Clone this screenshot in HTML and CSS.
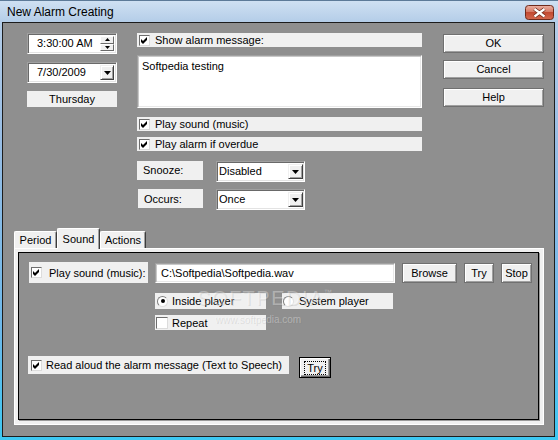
FILE: index.html
```html
<!DOCTYPE html>
<html>
<head>
<meta charset="utf-8">
<title>New Alarm Creating</title>
<link rel="stylesheet" href="styles.css">
</head>
<body>
<div class="window">
  <div class="titlebar">
    <span class="title">New Alarm Creating</span>
    <div class="close">
      <svg width="29" height="15" viewBox="0 0 29 15">
        <defs>
          <linearGradient id="cg" x1="0" y1="0" x2="0" y2="1">
            <stop offset="0" stop-color="#ecb2a4"/>
            <stop offset="0.45" stop-color="#d67a66"/>
            <stop offset="0.5" stop-color="#c24a32"/>
            <stop offset="1" stop-color="#d4694f"/>
          </linearGradient>
        </defs>
        <rect x="0.5" y="0.5" width="28" height="14" rx="3" fill="url(#cg)" stroke="#6e2a1c"/>
        <path d="M9.5 4 L19.5 11.5 M19.5 4 L9.5 11.5" stroke="#6a2618" stroke-width="3.8"/>
        <path d="M9.5 4 L19.5 11.5 M19.5 4 L9.5 11.5" stroke="#ffffff" stroke-width="2.2"/>
      </svg>
    </div>
  </div>

  <div class="client">
    <div class="top">
      <div class="col-time">
        <div class="field time">
          <span class="val">3:30:00 AM</span>
          <div class="spin">
            <div class="spin-btn"><svg width="5" height="3" viewBox="0 0 5 3"><polygon points="0,3 2.5,0 5,3" fill="#000"/></svg></div>
            <div class="spin-btn"><svg width="5" height="3" viewBox="0 0 5 3"><polygon points="0,0 5,0 2.5,3" fill="#000"/></svg></div>
          </div>
        </div>
        <div class="field date">
          <span class="val">7/30/2009</span>
          <div class="drop-btn"><svg width="7" height="4" viewBox="0 0 7 4"><polygon points="0,0 7,0 3.5,4" fill="#000"/></svg></div>
        </div>
        <div class="day">Thursday</div>
      </div>

      <div class="col-main">
        <div class="check-row">
          <span class="cb"><svg width="9" height="9" viewBox="0 0 9 9"><polygon points="1,3 3,5 7,1 7,4 3,8 1,6" fill="#000"/></svg></span>
          <span>Show alarm message:</span>
        </div>
        <div class="memo">Softpedia testing</div>
        <div class="check-row row-sound">
          <span class="cb"><svg width="9" height="9" viewBox="0 0 9 9"><polygon points="1,3 3,5 7,1 7,4 3,8 1,6" fill="#000"/></svg></span>
          <span>Play sound (music)</span>
        </div>
        <div class="check-row row-overdue">
          <span class="cb"><svg width="9" height="9" viewBox="0 0 9 9"><polygon points="1,3 3,5 7,1 7,4 3,8 1,6" fill="#000"/></svg></span>
          <span>Play alarm if overdue</span>
        </div>
        <div class="opt-row row-snooze">
          <div class="opt-label">Snooze:</div>
          <div class="combo">
            <span class="val">Disabled</span>
            <div class="drop-btn"><svg width="7" height="4" viewBox="0 0 7 4"><polygon points="0,0 7,0 3.5,4" fill="#000"/></svg></div>
          </div>
        </div>
        <div class="opt-row row-occurs">
          <div class="opt-label occurs-label">Occurs:</div>
          <div class="combo">
            <span class="val">Once</span>
            <div class="drop-btn"><svg width="7" height="4" viewBox="0 0 7 4"><polygon points="0,0 7,0 3.5,4" fill="#000"/></svg></div>
          </div>
        </div>
      </div>

      <div class="col-buttons">
        <div class="btn dlg">OK</div>
        <div class="btn dlg btn-cancel">Cancel</div>
        <div class="btn dlg btn-help">Help</div>
      </div>
    </div>

    <div class="tabs">
      <div class="tab tab-period">Period</div>
      <div class="tab tab-sound active">Sound</div>
      <div class="tab tab-actions">Actions</div>
    </div>

    <div class="panel">
      <div class="frame">
        <div class="prow prow-1">
          <div class="snd-label">
            <span class="cb"><svg width="9" height="9" viewBox="0 0 9 9"><polygon points="1,3 3,5 7,1 7,4 3,8 1,6" fill="#000"/></svg></span>
            <span>Play sound (music):</span>
          </div>
          <div class="path">C:\Softpedia\Softpedia.wav</div>
          <div class="btn small b-browse">Browse</div>
          <div class="btn small b-try">Try</div>
          <div class="btn small b-stop">Stop</div>
        </div>
        <div class="prow prow-2">
          <div class="radio-item">
            <span class="radio on"></span>
            <span>Inside player</span>
          </div>
          <div class="radio-item sys">
            <span class="radio"></span>
            <span>System player</span>
          </div>
        </div>
        <div class="prow prow-3">
          <div class="repeat-item">
            <span class="cb cb-big"></span>
            <span>Repeat</span>
          </div>
        </div>
        <div class="prow prow-4">
          <div class="tts-label">
            <span class="cb"><svg width="9" height="9" viewBox="0 0 9 9"><polygon points="1,3 3,5 7,1 7,4 3,8 1,6" fill="#000"/></svg></span>
            <span>Read aloud the alarm message (Text to Speech)</span>
          </div>
          <div class="btn default-btn"><span class="focus">Try</span></div>
        </div>
      </div>
    </div>

    <div class="watermark">
      <span class="wm-big">SOFTPEDIA</span><span class="wm-tm">™</span>
      <span class="wm-url">www.softpedia.com</span>
    </div>
  </div>
</div>
</body>
</html>
```

FILE: styles.css
```css
* { box-sizing: border-box; }
html, body { margin: 0; padding: 0; }
body {
  width: 558px;
  height: 440px;
  overflow: hidden;
  font-family: "Liberation Sans", Arial, sans-serif;
  font-size: 11px;
  color: #000;
  background: #8f8f8f;
}

.window {
  width: 558px;
  height: 440px;
  display: flex;
  flex-direction: column;
  padding: 0 3px 3px 2px;
  border-top: 1px solid #5d7a98;
  background: linear-gradient(to bottom, #cfe0f2 0, #b4cde8 21px, #98bde4 140px, #6cb8ea 330px, #3cc8f2 440px);
}

.titlebar {
  height: 21px;
  display: flex;
  align-items: flex-start;
  padding-left: 5px;
  flex: none;
}
.title {
  font-size: 12px;
  line-height: 14px;
  margin-top: 4px;
  color: #000;
}
.close {
  margin-left: auto;
  margin-top: 4px;
  margin-right: 1px;
  width: 29px;
  height: 15px;
}
.close svg { display: block; }

.client {
  position: relative;
  flex: 1;
  border: 1px solid #1c1c1c;
  background: #8f8f8f;
  overflow: hidden;
}

/* ---------- top section ---------- */
.top {
  display: flex;
  align-items: flex-start;
  padding: 10px 0 0 24px;
}
.col-time { width: 90px; display: flex; flex-direction: column; }
.col-main { width: 285px; margin-left: 20px; display: flex; flex-direction: column; }
.col-buttons { width: 101px; margin-left: 21px; margin-top: 1px; display: flex; flex-direction: column; }

.field, .combo {
  display: flex;
  align-items: center;
  background: #fff;
  border: 1px solid;
  border-color: #a0a0a0 #ffffff #ffffff #a0a0a0;
  box-shadow: inset 1px 1px #696969, inset -1px -1px #e3e3e3;
  padding: 2px;
}
.field { height: 21px; }
.field .val { padding-left: 7px; flex: 1; line-height: 13px; }
.date { margin-top: 8px; }

.spin {
  width: 14px;
  height: 15px;
  display: flex;
  flex-direction: column;
}
.spin-btn {
  flex: 1;
  display: flex;
  align-items: center;
  justify-content: center;
  background: #f0f0f0;
  border: 1px solid;
  border-color: #ffffff #6a6a6a #6a6a6a #ffffff;
}
.spin-btn svg { display: block; }

.drop-btn {
  width: 15px;
  height: 15px;
  flex: none;
  display: flex;
  align-items: center;
  justify-content: center;
  background: #f0f0f0;
  border: 1px solid;
  border-color: #f0f0f0 #404040 #404040 #f0f0f0;
  box-shadow: inset 1px 1px #ffffff, inset -1px -1px #a0a0a0;
}
.drop-btn svg { display: block; }
.field .drop-btn { width: 14px; }

.day {
  margin-top: 8px;
  height: 16px;
  line-height: 16px;
  text-align: center;
  background: #f0f0f0;
}

.check-row {
  height: 14px;
  display: flex;
  align-items: center;
  padding-left: 2px;
  background: #f0f0f0;
  line-height: 14px;
}
.cb {
  width: 11px;
  height: 11px;
  flex: none;
  display: flex;
  align-items: center;
  justify-content: center;
  background: #fff;
  border: 1px solid;
  border-color: #6e6e6e #dcdcdc #dcdcdc #6e6e6e;
  margin-right: 5px;
}
.cb svg { display: block; }
.cb-big { width: 12px; height: 12px; }

.memo {
  margin-top: 8px;
  height: 53px;
  padding: 3px 4px;
  background: #fff;
  border: 1px solid;
  border-color: #a0a0a0 #ffffff #ffffff #a0a0a0;
  box-shadow: inset 1px 1px #c8c8c8, inset -1px -1px #e8e8e8;
  line-height: 14px;
}
.row-sound { margin-top: 9px; }
.row-overdue { margin-top: 6px; }

.opt-row { display: flex; align-items: flex-start; height: 21px; }
.row-snooze { margin-top: 10px; }
.row-occurs { margin-top: 7px; }
.opt-label {
  width: 66px;
  height: 19px;
  background: #f0f0f0;
  padding: 2px 0 0 6px;
  line-height: 14px;
}
.occurs-label { width: 65px; margin-left: 1px; padding-top: 3px; }
.combo {
  width: 89px;
  height: 21px;
  margin-left: 13px;
  padding: 1px;
}
.combo .val { flex: 1; padding-left: 1px; line-height: 13px; }

.btn {
  display: flex;
  align-items: center;
  justify-content: center;
  background: #f0f0f0;
  border: 1px solid #707070;
  box-shadow: inset 1px 1px #ffffff, inset -1px -1px #a0a0a0;
  line-height: 13px;
}
.dlg { height: 19px; }
.btn-cancel { margin-top: 7px; }
.btn-help { margin-top: 9px; }

/* ---------- tabs ---------- */
.tabs {
  margin: 18px 0 0 11px;
  height: 20px;
  display: flex;
  align-items: flex-end;
}
.tab {
  height: 17px;
  background: #f0f0f0;
  border-top: 1px solid #ffffff;
  border-left: 1px solid #ffffff;
  border-right: 1px solid #3c3c3c;
  border-radius: 2px 2px 0 0;
  box-shadow: inset -1px 0 #a0a0a0;
  text-align: center;
  line-height: 15px;
  padding-top: 1px;
}
.tab-period { width: 43px; }
.tab-sound { width: 43px; }
.tab-actions { width: 46px; }
.tab.active {
  height: 21px;
  margin-bottom: -1px;
  padding-top: 3px;
  position: relative;
  z-index: 1;
}

/* ---------- panel ---------- */
.panel {
  margin-left: 11px;
  width: 530px;
  height: 177px;
  background: #f0f0f0;
  border: 1px solid #ffffff;
  padding: 3px 4px 4px 3px;
}
.frame {
  width: 521px;
  height: 168px;
  border: 1px solid #000;
  box-shadow: 1px 1px 0 #9a9a9a;
  background: #8f8f8f;
  padding: 9px 0 0 10px;
}
.prow { display: flex; align-items: flex-start; }
.snd-label {
  width: 119px;
  height: 21px;
  display: flex;
  align-items: center;
  padding-left: 2px;
  background: #f0f0f0;
}
.snd-label .cb { margin-right: 7px; }
.path {
  width: 240px;
  height: 20px;
  margin: 1px 0 0 7px;
  padding: 0 5px;
  background: #fff;
  border: 1px solid;
  border-color: #a0a0a0 #ffffff #ffffff #a0a0a0;
  box-shadow: inset 1px 1px #c8c8c8, inset -1px -1px #e8e8e8;
  line-height: 18px;
}
.small { height: 20px; margin: 1px 0 0 7px; }
.b-browse { width: 55px; }
.b-try { width: 30px; }
.b-stop { width: 31px; }

.prow-2 { margin: 10px 0 0 126px; }
.radio-item {
  width: 111px;
  height: 16px;
  display: flex;
  align-items: center;
  padding-left: 2px;
  background: #f0f0f0;
}
.radio-item.sys { margin-left: 16px; padding-left: 1px; }
.radio-item.sys .radio { margin-right: 5px; }
.radio {
  width: 11px;
  height: 11px;
  flex: none;
  border-radius: 50%;
  background: #fff;
  border: 1px solid;
  border-color: #808080 #e0e0e0 #e0e0e0 #808080;
  margin-right: 4px;
  display: flex;
  align-items: center;
  justify-content: center;
}
.radio.on::after {
  content: "";
  width: 4px;
  height: 4px;
  border-radius: 50%;
  background: #000;
}

.prow-3 { margin: 6px 0 0 126px; }
.repeat-item {
  width: 111px;
  height: 15px;
  display: flex;
  align-items: center;
  padding-left: 1px;
  background: #f0f0f0;
}
.repeat-item .cb { margin-right: 4px; }

.prow-4 { margin: 26px 0 0 -1px; }
.tts-label {
  width: 261px;
  height: 18px;
  display: flex;
  align-items: center;
  padding-left: 3px;
  background: #f0f0f0;
}
.tts-label .cb { margin-right: 4px; }
.default-btn {
  width: 32px;
  height: 21px;
  margin: 1px 0 0 10px;
  border: 1px solid #000;
  box-shadow: inset 1px 1px #ffffff, inset -1px -1px #696969, inset -2px -2px #a0a0a0;
}
.focus {
  outline: 1px dotted #000;
  padding: 0 2px;
  line-height: 12px;
}

/* ---------- watermark ---------- */
.watermark {
  position: absolute;
  left: 194px;
  top: 265px;
  width: 140px;
  height: 50px;
  pointer-events: none;
  z-index: 5;
  color: rgba(255, 255, 255, 0.32);
  text-shadow: 1px 1px 0 rgba(120, 120, 120, 0.18);
}
.wm-big {
  font-size: 20px;
  line-height: 20px;
  letter-spacing: 1.5px;
}
.wm-tm {
  font-size: 8px;
  vertical-align: top;
}
.wm-url {
  display: block;
  margin: 6px 0 0 18px;
  font-size: 10px;
  line-height: 12px;
}
```
